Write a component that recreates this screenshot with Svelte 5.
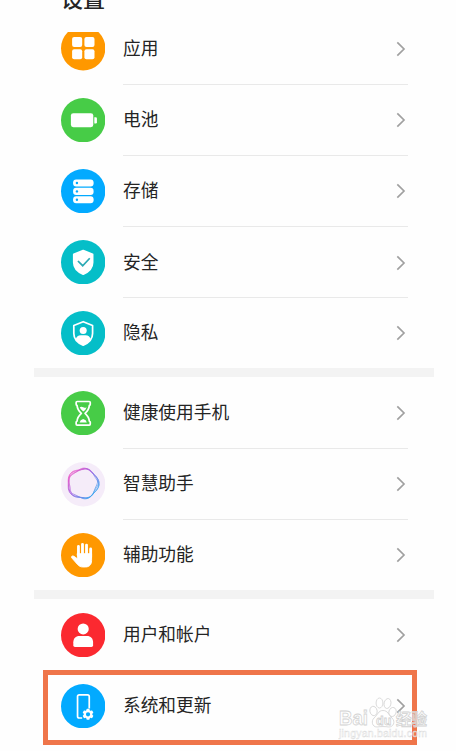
<script lang="ts">
  type Item = { icon: string; label: string; color: string };

  const groups: Item[][] = [
    [
      { icon: 'apps', label: '应用', color: '#ff9800' },
      { icon: 'battery', label: '电池', color: '#47cc47' },
      { icon: 'storage', label: '存储', color: '#02aaff' },
      { icon: 'security', label: '安全', color: '#05bec8' },
      { icon: 'privacy', label: '隐私', color: '#05bec8' }
    ],
    [
      { icon: 'balance', label: '健康使用手机', color: '#47cc47' },
      { icon: 'assistant', label: '智慧助手', color: '#f5ecf9' },
      { icon: 'accessibility', label: '辅助功能', color: '#ff9800' }
    ],
    [
      { icon: 'users', label: '用户和帐户', color: '#fb2930' },
      { icon: 'system', label: '系统和更新', color: '#02aaff' }
    ]
  ];

  const teeth = [0, 60, 120, 180, 240, 300];

  // Wavy closed loop around the assistant icon's centre
  function strand(phase: number, size: number): string {
    const points: string[] = [];
    for (let i = 0; i < 72; i++) {
      const a = (i * Math.PI) / 36;
      const r = size + 0.75 * Math.cos(5 * a + phase) + 0.5 * Math.cos(2 * a + phase * 2);
      points.push(`${(21.8 + r * Math.cos(a)).toFixed(2)} ${(21.4 + r * Math.sin(a)).toFixed(2)}`);
    }
    return `M${points.join('L')}z`;
  }

  const strands = [strand(-0.6, 14.6), strand(0, 14.9), strand(0.6, 14.5), strand(1.2, 14.2)];
</script>

{#snippet glyph(name: string)}
  {#if name === 'apps'}
    <g fill="#fff">
      <rect x="11" y="10.8" width="10" height="10" rx="2" />
      <rect x="23.2" y="10.8" width="10" height="10" rx="2" />
      <rect x="11" y="23" width="10" height="10" rx="2" />
      <rect x="23.2" y="23" width="10" height="10" rx="2" />
    </g>
  {:else if name === 'battery'}
    <g fill="#fff">
      <rect x="9.8" y="15" width="22.2" height="14" rx="2.4" />
      <path d="M33 19h1.4q1.2 0 1.2 1.2v3.9q0 1.2-1.2 1.2H33z" />
    </g>
  {:else if name === 'storage'}
    {#each [10.4, 18.7, 27] as y}
      <rect x="12" {y} width="20.3" height="7" rx="3" fill="#fff" />
      <circle cx="15.8" cy={y + 3.5} r="1.2" fill="#02aaff" />
    {/each}
  {:else if name === 'security'}
    <path
      d="M22 10.6l9.2 3.8v8c0 5.4-4 9.2-9.2 11.4-5.2-2.2-9.2-6-9.2-11.4v-8z"
      fill="#fff"
      stroke="#fff"
      stroke-width="2"
      stroke-linejoin="round"
    />
    <path d="M16.8 20.8l4.7 4.7 7-7.4" fill="none" stroke="#2aa9b4" stroke-width="1.7" />
  {:else if name === 'privacy'}
    <path
      d="M22 10.6l9.3 3.7v8c0 5.4-4 9.4-9.3 11.6-5.3-2.2-9.3-6.2-9.3-11.6v-8z"
      fill="none"
      stroke="#fff"
      stroke-width="1.7"
      stroke-linejoin="round"
    />
    <circle cx="22" cy="19.3" r="3.5" fill="#fff" />
    <path d="M14.6 28C15.4 25.4 17 24 19.6 24h4.8c2.6 0 4.2 1.4 5 4-1.6 2.7-4.2 4.6-7.4 6-3.2-1.4-5.8-3.3-7.4-6z" fill="#fff" />
  {:else if name === 'balance'}
    <path
      d="M16 10.4h12q1 0 1 1v1.8q0 1-.9 1c-.3 4.2-1.8 5.8-4.3 7.9 2.5 2.1 4 3.7 4.3 7.9q.9 0 .9 1v1.8q0 1-1 1H16q-1 0-1-1V31q0-1 .9-1c.3-4.2 1.8-5.8 4.3-7.9-2.5-2.1-4-3.7-4.3-7.9q-.9 0-.9-1v-1.8q0-1 1-1z"
      fill="none"
      stroke="#fff"
      stroke-width="1.7"
      stroke-linejoin="round"
    />
    <path d="M18.6 16.2q1.7-1 3.4 0t3.4-.2q-.6 2.5-3.4 4.3-2.7-1.7-3.4-4.1zM18.4 31.2q.5-2.6 3.6-3.4 3.1.8 3.6 3.4z" fill="#fff" />
  {:else if name === 'assistant'}
    <g fill="none" stroke="url(#halo)" stroke-width=".9" stroke-opacity=".75">
      {#each strands as d}
        <path {d} />
      {/each}
    </g>
  {:else if name === 'accessibility'}
    <g stroke="#fff" stroke-linecap="round" fill="#fff">
      <path d="M17.3 22V13.2M21.3 22V11.2M25.3 22V12M29.4 24V15.8" stroke-width="2.8" />
      <path
        d="M16.4 20.5h13.9v7c0 3.8-2.3 6.2-6 6.2h-2.6c-2.3 0-4-.9-5.5-2.7l-5.4-6.2c-1.2-1.5.6-2.7 2-1.7l3.6 2.5z"
        stroke-width=".9"
      />
    </g>
  {:else if name === 'users'}
    <g fill="#fff">
      <circle cx="22" cy="15.8" r="5.5" />
      <path d="M12.2 29c0-4 2.4-6.3 6-6.3h7.6c3.6 0 6 2.3 6 6.3v3q0 1.6-1.6 1.6H13.8q-1.6 0-1.6-1.6z" />
    </g>
  {:else if name === 'system'}
    <path
      d="M21 33.7h-2.9q-1.7 0-1.7-1.7V12.4q0-1.7 1.7-1.7h8.2q1.7 0 1.7 1.7v11.8"
      fill="none"
      stroke="#fff"
      stroke-width="1.7"
    />
    <g transform="translate(26.8 30)">
      {#each teeth as angle}
        <rect x="-1.6" y="-5.4" width="3.2" height="3" rx=".8" fill="#fff" transform="rotate({angle})" />
      {/each}
      <circle r="3.2" fill="#02aaff" stroke="#fff" stroke-width="2.2" />
    </g>
  {/if}
{/snippet}

<main class="screen">
  <header><h1>设置</h1></header>

  <div class="viewport">
    <div class="list">
      {#each groups as group}
        <ul class="group">
          {#each group as item}
            <li class="row">
              <svg class="icon" viewBox="0 0 44 44" aria-hidden="true">
                <defs>
                  <linearGradient id="halo" gradientUnits="userSpaceOnUse" x1="10" y1="9" x2="34" y2="30">
                    <stop offset="0" stop-color="#f04bc0" />
                    <stop offset=".45" stop-color="#a35fe0" />
                    <stop offset="1" stop-color="#35a2ee" />
                  </linearGradient>
                </defs>
                <circle cx="22" cy="22" r="22" fill={item.color} />
                {@render glyph(item.icon)}
              </svg>
              <div class="content">
                <span class="label">{item.label}</span>
                <svg class="chevron" viewBox="0 0 10 16" aria-hidden="true">
                  <path d="M1.3 1.3L8 8l-6.7 6.7" />
                </svg>
              </div>
            </li>
          {/each}
        </ul>
      {/each}
    </div>
  </div>

  <div class="highlight"></div>

  <svg class="watermark" viewBox="0 0 96 46" aria-hidden="true">
    <text x="1" y="31" font-size="21" textLength="29" lengthAdjust="spacingAndGlyphs">Bai</text>
    <ellipse cx="35.5" cy="17" rx="3.6" ry="4.7" transform="rotate(-12 35.5 17)" />
    <ellipse cx="41.5" cy="9" rx="3.4" ry="5" />
    <ellipse cx="49.5" cy="9.5" rx="3.4" ry="5" transform="rotate(12 49.5 9.5)" />
    <ellipse cx="54.5" cy="18" rx="3.6" ry="4.6" transform="rotate(18 54.5 18)" />
    <path d="M36 24c4-3 4-7.5 9-7.5s5.5 4.5 9 7.5c4 4 1 9-3 9-4-.6-8-.6-12 0-5 0-6-6-3-9z" />
    <text x="38" y="30.5" font-size="12.5">du</text>
    <text class="cjk" x="58" y="31" font-size="15.5" textLength="31">经验</text>
    <text class="site" x="1" y="43" font-size="10.5" textLength="88">jingyan.baidu.com</text>
  </svg>
</main>

<style>
  :global(body) {
    background: #fefefe;
  }

  .screen {
    position: relative;
    width: 456px;
    height: 751px;
    overflow: hidden;
    font-family: Roboto, 'Noto Sans CJK SC', sans-serif;
    color: #242424;
  }

  header {
    display: flex;
    align-items: flex-start;
    height: 32px;
    padding-left: 61px;
  }

  h1 {
    margin: -16px 0 0;
    font-size: 22px;
    line-height: 32px;
    font-weight: 500;
  }

  .viewport {
    width: 400px;
    height: 719px;
    margin-left: 34px;
    overflow: hidden;
  }

  /* scrolled so the first row is partly under the title */
  .list {
    display: flex;
    flex-direction: column;
    gap: 9px;
    margin-top: -18.75px;
    background: #f3f3f3;
  }

  .group {
    list-style: none;
    margin: 0;
    padding: 0;
    background: #fefefe;
  }

  .group:last-child {
    padding-top: 0.6px;
  }

  .row {
    display: flex;
    align-items: center;
    height: 71.3px;
    padding: 0 26px 0 27px;
  }

  .row:last-child {
    height: 70px;
  }

  .icon {
    flex: none;
    width: 44.4px;
    height: 44.4px;
  }

  .group:first-child .icon {
    margin-bottom: 1px;
  }

  .content {
    display: flex;
    flex: 1;
    align-items: center;
    justify-content: space-between;
    box-sizing: border-box;
    height: 100%;
    margin-left: 17.6px;
    padding-top: 1px;
    padding-right: 2.4px;
    border-bottom: 1px solid #e9e9e9;
  }

  .row:last-child .content,
  .group:last-child .content {
    border-bottom-color: transparent;
  }

  .label {
    font-size: 17.7px;
    line-height: 24px;
  }

  .chevron {
    width: 10px;
    height: 16px;
    fill: none;
    stroke: #a0a0a0;
    stroke-width: 1.7;
  }

  .highlight {
    position: absolute;
    left: 43px;
    top: 670px;
    width: 374px;
    height: 75px;
    box-sizing: border-box;
    border: 5px solid #ef754a;
  }

  .watermark {
    position: absolute;
    left: 338px;
    top: 694px;
    width: 96px;
    height: 46px;
    fill: #fff;
    fill-opacity: 0.6;
    stroke: #d2d2d2;
    stroke-width: 0.8;
    font-family: 'Liberation Sans', sans-serif;
    font-weight: 700;
  }

  .cjk {
    font-family: 'Noto Sans CJK SC', sans-serif;
  }

  .site {
    stroke-width: 0.4;
    stroke: #dadada;
    font-weight: 400;
  }
</style>
